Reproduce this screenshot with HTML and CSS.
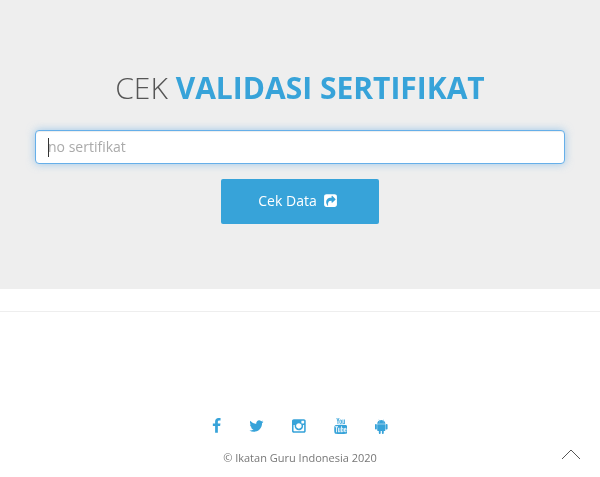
FILE: index.html
```html
<!DOCTYPE html>
<html lang="id">
<head>
<meta charset="utf-8">
<title>Cek Validasi Sertifikat</title>
<link rel="stylesheet" href="styles.css">
</head>
<body>
<section class="hero">
  <h1 class="title">CEK <strong>VALIDASI SERTIFIKAT</strong></h1>
  <form class="form" onsubmit="return false">
    <div class="field-wrap">
      <input class="field" type="text" placeholder="no sertifikat">
      <span class="caret"></span>
    </div>
    <button class="btn" type="submit">Cek Data
      <svg class="btn-icon" viewBox="0 0 1536 1792"><path fill="currentColor" d="M1005 1145l352-352q19-19 19-45t-19-45l-352-352q-30-31-69-14-40 17-40 59v160q-119 0-216 19.5t-162.5 51-114 79-76.5 95.5-44.5 109-21.5 111.5-5 110.5q0 181 167 404 11 12 25 12 7 0 13-3 22-9 19-33-44-354 62-473 46-52 130-75.5t224-23.5v160q0 42 40 59 12 5 24 5 26 0 45-19zm531-721v960q0 119-84.5 203.5t-203.5 84.5h-960q-119 0-203.5-84.5t-84.5-203.5v-960q0-119 84.5-203.5t203.5-84.5h960q119 0 203.5 84.5t84.5 203.5z"/></svg>
    </button>
  </form>
</section>
<hr class="rule">
<footer class="footer">
  <div class="social">
    <svg class="ico" width="9.14" height="16" viewBox="0 0 1024 1792"><path d="M959 12v264h-157q-86 0-116 36t-30 108v189h293l-39 296h-254v759h-306v-759h-255v-296h255v-218q0-186 104-288.5t277-102.5q147 0 228 12z"/></svg>
    <svg class="ico" width="14.86" height="16" viewBox="0 0 1664 1792"><path d="M1620 408q-67 98-162 167 1 14 1 42 0 130-38 259.5t-115.5 248.5-184.5 210.5-258 146-323 54.5q-271 0-496-145 35 4 76 4 225 0 401-138-105-2-188-64.5t-114-159.5q33 5 61 5 43 0 85-11-112-23-185.5-111.5t-73.5-205.5v-4q68 38 146 41-66-44-105-115t-39-154q0-88 44-163 121 149 294.5 238.5t371.5 99.5q-8-38-8-74 0-134 94.5-228.5t228.5-94.5q140 0 236 102 109-21 205-78-37 115-142 178 92-10 184-50z"/></svg>
    <svg class="ico" width="13.71" height="16" viewBox="0 0 1536 1792"><path d="M1362 1426v-648h-135q20 63 20 131 0 126-64 232.5t-174 168.5-240 62q-197 0-337-135.5t-140-327.5q0-68 20-131h-141v648q0 26 17.5 43.5t43.5 17.5h1069q25 0 43-17.5t18-43.5zm-284-533q0-124-90.5-211.5t-218.5-87.5q-127 0-217.5 87.5t-90.5 211.5 90.5 211.5 217.5 87.5q128 0 218.5-87.5t90.5-211.5zm284-360v-165q0-28-20-48.5t-49-20.5h-174q-29 0-49 20.5t-20 48.5v165q0 29 20 49t49 20h174q29 0 49-20t20-49zm174-208v1142q0 81-58 139t-139 58h-1142q-81 0-139-58t-58-139v-1142q0-81 58-139t139-58h1142q81 0 139 58t58 139z"/></svg>
    <svg class="ico" width="13.71" height="16" viewBox="0 0 1536 1792"><path d="M971 1244v211q0 67-39 67-23 0-45-22v-301q22-22 45-22 39 0 39 67zm338 1v46h-90v-46q0-68 45-68t45 68zm-966-218h107v-94h-312v94h105v569h100v-569zm288 569h89v-494h-89v378q-30 42-57 42-18 0-21-21-1-3-1-35v-364h-89v391q0 49 8 73 12 37 58 37 48 0 102-61v54zm429-148v-197q0-73-9-99-17-56-71-56-50 0-93 54v-217h-89v663h89v-48q45 55 93 55 54 0 71-55 9-27 9-100zm338-10v-13h-91q0 51-2 61-7 36-40 36-46 0-46-69v-87h179v-103q0-79-27-116-39-51-106-51-68 0-107 51-28 37-28 116v173q0 79 29 116 39 51 108 51 72 0 108-53 18-27 21-54 2-9 2-58zm-608-913v-210q0-69-43-69t-43 69v210q0 70 43 70t43-70zm719 751q0 234-26 350-14 59-58 99t-102 46q-184 21-555 21t-555-21q-58-6-102.5-46t-57.5-99q-26-112-26-350 0-234 26-350 14-59 58-99t103-47q183-20 554-20t555 20q58 7 102.5 47t57.5 99q26 112 26 350zm-998-1276h102l-121 399v271h-100v-271q-14-74-61-212-37-103-65-187h106l71 263zm370 333v175q0 81-28 118-37 51-106 51-67 0-105-51-28-38-28-118v-175q0-80 28-117 38-51 105-51 69 0 106 51 28 37 28 117zm335-162v499h-91v-55q-53 62-103 62-46 0-59-37-8-24-8-75v-394h91v367q0 33 1 35 3 22 21 22 27 0 57-43v-381h91z"/></svg>
    <svg class="ico" width="12.57" height="16" viewBox="0 0 1408 1792"><path d="M493 483q16 0 27.5-11.5t11.5-27.5-11.5-27.5-27.5-11.5-27 11.5-11 27.5 11 27.5 27 11.5zm422 0q16 0 27-11.5t11-27.5-11-27.5-27-11.5-27.5 11.5-11.5 27.5 11.5 27.5 27.5 11.5zm-812 184q42 0 72 30t30 72v430q0 43-29.5 73t-72.5 30-73-30-30-73v-430q0-42 30-72t73-30zm1060 19v666q0 46-32 78t-77 32h-75v227q0 43-30 73t-73 30-73-30-30-73v-227h-138v227q0 43-30 73t-73 30q-42 0-72-30t-30-73l-1-227h-74q-46 0-78-32t-32-78v-666h918zm-232-405q107 55 171 153.5t64 215.5h-925q0-117 64-215.5t172-153.5l-71-131q-7-13 5-20 13-6 20 6l72 132q95-42 201-42t201 42l72-132q7-12 20-6 12 7 5 20zm477 488v430q0 43-30 73t-73 30q-42 0-72-30t-30-73v-430q0-43 30-72.5t72-29.5q43 0 73 29.5t30 72.5z"/></svg>
  </div>
  <p class="copy">© Ikatan Guru Indonesia 2020</p>
</footer>
<a class="to-top" href="#" aria-label="Ke atas">
  <svg width="20" height="12" viewBox="0 0 20 12"><polyline points="1,11 10,2 19,11" fill="none" stroke="#555" stroke-width="1"/></svg>
</a>
</body>
</html>
```
FILE: styles.css
```css
* { box-sizing: border-box; }
html, body { margin: 0; padding: 0; }
body {
  background: #fff;
  font-family: "Open Sans", sans-serif;
  font-size: 14px;
  color: #555;
  height: 477px;
  overflow: hidden;
  position: relative;
  will-change: transform;
}
.hero {
  background: #eee;
  height: 289px;
  padding: 68px 35px 0;
}
.title {
  margin: 0;
  height: 40px;
  line-height: 40px;
  font-size: 30px;
  font-weight: 300;
  text-align: center;
  color: #555;
}
.title strong { font-weight: 700; color: #37a3d9; }
.form {
  display: flex;
  flex-direction: column;
  align-items: center;
  margin-top: 22px;
}
.field-wrap {
  position: relative;
  width: 100%;
}
.field {
  display: block;
  width: 100%;
  height: 34px;
  padding: 5px 12px 7px;
  border: 1px solid #66afe9;
  border-radius: 4px;
  outline: 0;
  background: #fff;
  font: 14px "Open Sans", sans-serif;
  color: #555;
  box-shadow: inset 0 1px 1px rgba(0,0,0,.075), 0 0 8px rgba(102,175,233,.6);
}
.field::placeholder { color: #aaa; opacity: 1; }
.caret {
  position: absolute;
  left: 13px;
  top: 8px;
  width: 1px;
  height: 19px;
  background: #333;
}
.btn {
  display: flex;
  align-items: center;
  justify-content: center;
  gap: 7px;
  width: 158px;
  height: 45px;
  margin-top: 15px;
  padding: 0 5px 2px 0;
  border: 0;
  border-radius: 2px;
  background: #37a3d9;
  color: #fff;
  font: 14px "Open Sans", sans-serif;
}
.btn-icon { width: 13px; height: 15px; }
.rule {
  margin: 22px 0 0;
  border: 0;
  border-top: 1px solid #eee;
}
.footer {
  padding-top: 106px;
  text-align: center;
}
.social {
  display: flex;
  justify-content: center;
  align-items: center;
  gap: 28px;
  height: 16px;
}
.ico { fill: #37a3d9; }
.copy {
  margin: 16px 0 0;
  font-size: 11px;
  line-height: 16px;
  color: #777;
}
.to-top {
  position: absolute;
  left: 561px;
  top: 448px;
  display: block;
  line-height: 0;
}
```
